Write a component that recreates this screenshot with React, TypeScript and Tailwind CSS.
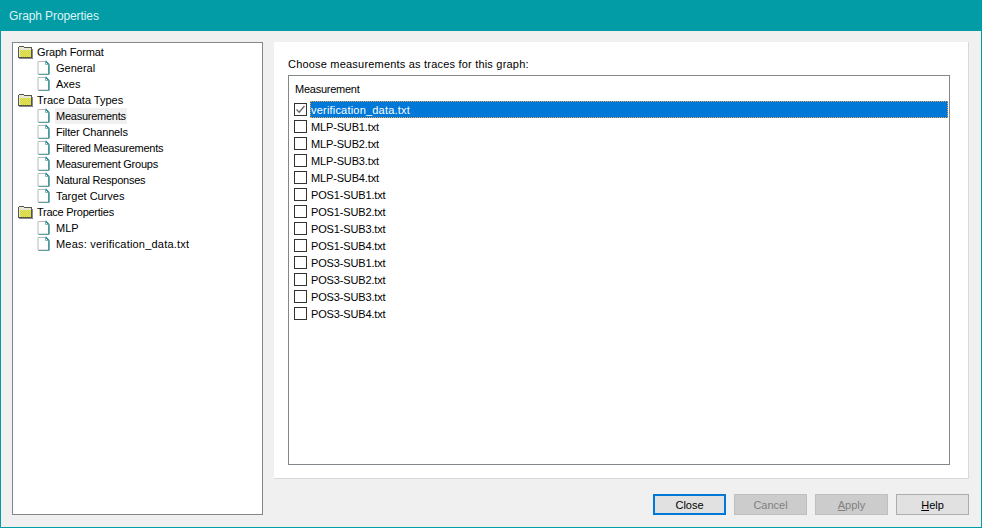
import React from 'react';

const narrow = 'tracking-[-0.25px]';
const slight = 'tracking-[-0.15px]';
const wide = 'tracking-[0.2px]';

const treeGroups = [
  { label: 'Graph Format', cls: slight, items: [{ text: 'General' }, { text: 'Axes' }] },
  {
    label: 'Trace Data Types',
    cls: '',
    items: [
      { text: 'Measurements', cls: narrow },
      { text: 'Filter Channels', cls: slight },
      { text: 'Filtered Measurements', cls: narrow },
      { text: 'Measurement Groups', cls: narrow },
      { text: 'Natural Responses', cls: narrow },
      { text: 'Target Curves' },
    ],
  },
  { label: 'Trace Properties', cls: narrow, items: [{ text: 'MLP' }, { text: 'Meas: verification_data.txt', cls: wide }] },
];

const measurements = [
  'MLP-SUB1.txt', 'MLP-SUB2.txt', 'MLP-SUB3.txt', 'MLP-SUB4.txt',
  'POS1-SUB1.txt', 'POS1-SUB2.txt', 'POS1-SUB3.txt', 'POS1-SUB4.txt',
  'POS3-SUB1.txt', 'POS3-SUB2.txt', 'POS3-SUB3.txt', 'POS3-SUB4.txt',
];

function FolderIcon() {
  return (
    <svg width="16" height="14" viewBox="0 0 16 14" shapeRendering="crispEdges" className="shrink-0">
      <defs>
        <pattern id="dither" width="2" height="2" patternUnits="userSpaceOnUse">
          <rect width="2" height="2" fill="#f2f200" />
          <rect width="1" height="1" fill="#c8c8a0" />
          <rect x="1" y="1" width="1" height="1" fill="#c8c8a0" />
        </pattern>
      </defs>
      <path d="M.5 12.5V2.5L1.5 1.5H5.5L6.5 2.5H13.5V12.5Z" fill="#e8e8d8" stroke="#55554a" />
      <rect x="2" y="5" width="11" height="7" fill="url(#dither)" />
      <path d="M14.5 4V13.5H1" stroke="#8a8a8a" fill="none" />
    </svg>
  );
}

function PageIcon() {
  return (
    <svg width="13" height="16" viewBox="0 0 13 16" className="shrink-0">
      <path d="M1 1.5H8.5L11.5 4.5V14H1Z" fill="#fff" stroke="#b8baba" />
      <path d="M8.5 1L12 4.5V14.5" fill="none" stroke="#0f7f86" strokeWidth="1.2" />
      <path d="M8.5 1.5V4.5H11.5" fill="none" stroke="#8fb8bb" />
      <path d="M1.5 14.5H12" stroke="#5f9ea3" />
    </svg>
  );
}

function Checkbox({ checked }: { checked?: boolean }) {
  return (
    <div className="w-[13px] h-[13px] shrink-0 border border-[#333] bg-white flex items-center justify-center">
      {checked && (
        <svg width="11" height="11" viewBox="0 0 11 11">
          <path d="M1.5 5.5L4.2 8.2L9.5 2" fill="none" stroke="#666" strokeWidth="1.3" />
        </svg>
      )}
    </div>
  );
}

function DialogButton({ label, mnemonic, rest, disabled, primary }: { label?: string; mnemonic?: string; rest?: string; disabled?: boolean; primary?: boolean }) {
  let cls = 'border border-[#adadad] bg-[#e1e1e1] text-black';
  if (disabled) cls = 'border border-[#bfbfbf] bg-[#cccccc] text-[#808080]';
  if (primary) cls = 'border-2 border-[#0078d7] bg-[#e1e1e1] text-black';
  return (
    <div className={`w-[73px] h-[21px] flex items-center justify-center ${cls}`}>
      {label}
      {mnemonic && <span className="underline">{mnemonic}</span>}
      {rest}
    </div>
  );
}

export default function App() {
  return (
    <div className="w-[982px] h-[528px] flex flex-col bg-[#019ca6] px-px pb-px overflow-hidden text-[11px] leading-4 text-black font-['Liberation_Sans',sans-serif]">
      {/* Title bar */}
      <div className="h-[31px] shrink-0 flex items-center pl-2 text-[12px] tracking-[-0.1px] text-[#dff3f4]">Graph Properties</div>

      <div className="flex-1 min-h-0 bg-[#f0f0f0] flex gap-[11px] pl-[11px] pr-3 pt-[11px] pb-3">
        {/* Tree */}
        <div className="w-[251px] shrink-0 border border-[#82878c] bg-white pt-px pl-[5px]">
          {treeGroups.map((group) => (
            <div key={group.label}>
              <div className="h-4 flex items-center gap-[3px]">
                <FolderIcon />
                <span className={group.cls}>{group.label}</span>
              </div>
              {group.items.map((item) => (
                <div key={item.text} className="h-4 flex items-center pl-[19px]">
                  <PageIcon />
                  <span className={`${item.cls ?? ''} ${item.text === 'Measurements' ? 'ml-[5px] px-px bg-[#f0f0f0]' : 'ml-1.5'}`}>{item.text}</span>
                </div>
              ))}
            </div>
          ))}
        </div>

        {/* Right side */}
        <div className="flex-1 min-w-0 flex flex-col">
          <div className="h-[437px] shrink-0 bg-white border-r border-b border-[#d9d9d9] pl-3.5 pr-[18px] pt-3.5">
            <div className={`h-4 mb-[3px] ${wide}`}>Choose measurements as traces for this graph:</div>
            <div className="h-[390px] border border-[#82878c] bg-white pl-[5px] pr-px pt-[5px]">
              <div className={`h-5 pl-px ${narrow}`}>Measurement</div>
              <div className="h-[17px] flex items-center">
                <Checkbox checked />
                <div className={`flex-1 ml-[3px] h-[17px] pl-px flex items-center bg-[#0078d7] text-white outline-1 -outline-offset-1 outline-dotted outline-[#e8a35a] ${wide}`}>verification_data.txt</div>
              </div>
              {measurements.map((name) => (
                <div key={name} className="h-[17px] flex items-center">
                  <Checkbox />
                  <span className={`ml-1 pt-px ${slight}`}>{name}</span>
                </div>
              ))}
            </div>
          </div>

          <div className="flex justify-end gap-2 mt-[15px]">
            <DialogButton label="Close" primary />
            <DialogButton label="Cancel" disabled />
            <DialogButton mnemonic="A" rest="pply" disabled />
            <DialogButton mnemonic="H" rest="elp" />
          </div>
        </div>
      </div>
    </div>
  );
}
